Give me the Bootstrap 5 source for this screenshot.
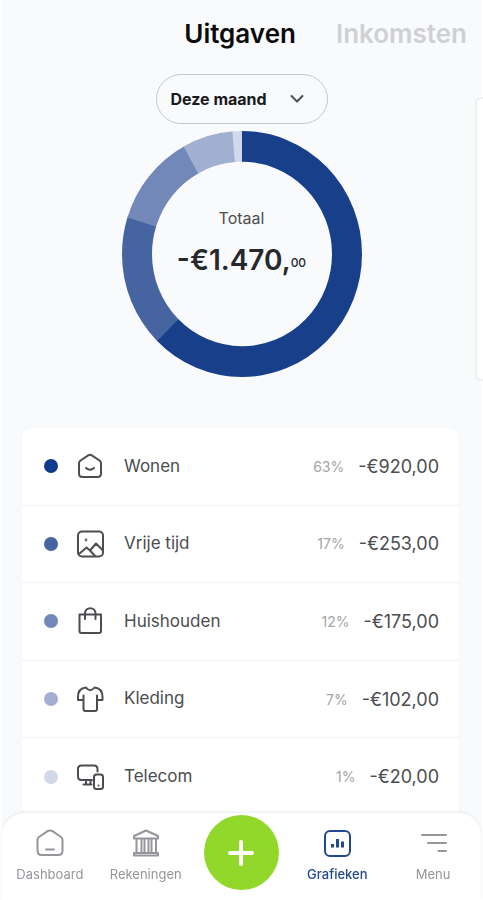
<!DOCTYPE html>
<html lang="nl">
<head>
<meta charset="utf-8">
<meta name="viewport" content="width=device-width, initial-scale=1">
<title>Uitgaven</title>
<link href="https://cdn.jsdelivr.net/npm/bootstrap@5.3.0/dist/css/bootstrap.min.css" rel="stylesheet">
<style>
  body {
    font-family: Inter, "Liberation Sans", sans-serif;
    color: #4c4d50;
    min-height: 100vh;
    background: linear-gradient(90deg, #fff 2px, #f9fafc 2px calc(100% - 2px), #fff calc(100% - 2px));
  }
  .tabs-top { gap: 40px; padding: 15px 16px 0 0; }
  .tabs-top a { font-size: 26px; line-height: 38px; font-weight: 600; color: #cfd0d2; text-decoration: none; }
  .tabs-top a.active { color: #0b0b0c; }

  .overview { display: grid; grid-template-columns: 1fr auto 1fr; padding-top: 21px; }
  .overview-main { grid-column: 2; }
  .next-panel { align-self: end; justify-self: end; width: 8px; height: 284px; background: #fff; border: 2px solid #eef0f1; border-right: 0; border-radius: 6px 0 0 6px; margin-bottom: -4px; }

  .period { width: 172px; height: 50px; border: 1px solid #c6c7c9; border-radius: 25px; padding: 0 14px; font-size: 16px; font-weight: 700; color: #18191b; background-color: transparent;
    background-image: none; }
  .period-box { display: grid; margin-bottom: 7px; }
  .period-box > * { grid-area: 1 / 1; }
  .period-box svg { justify-self: end; align-self: center; margin-right: 24px; pointer-events: none; }

  .donut { display: grid; place-items: center; }
  .donut > * { grid-area: 1 / 1; }
  .donut circle { fill: none; stroke-width: 30; }
  .total { text-align: center; padding-bottom: 16px; }
  .total-label { font-size: 16px; line-height: 24px; margin-bottom: 6px; }
  .total-sum { font-size: 28px; line-height: 48px; font-weight: 600; color: #26282c; }
  .total-sum small { font-size: 12px; font-weight: 500; vertical-align: 3px; }

  .costs { margin: 51px 24px 0 22px; min-height: 388px; border-radius: 10px; background: #fff; box-shadow: 0 0 4px #f3f5f8; }
  .cost { flex: 1 1 0; border-bottom: 1px solid #f2f2f4; padding: 0 20px 0 22px; font-size: 17px; }
  .dot { width: 14px; height: 14px; border-radius: 50%; margin-right: 16px; }
  .cost svg { width: 32px; height: 32px; margin-right: 18px; }
  .line-icon { fill: none; stroke: currentColor; stroke-width: 2; stroke-linejoin: round; stroke-linecap: round; }
  .share { font-size: 14px; color: #a3a4a6; margin-right: 14px; }
  .sum { font-size: 18px; }

  .bottom-bar { margin: 0 2px; height: 87px; background: #fff; border-radius: 22px 22px 0 0; box-shadow: 0 -1px 3px #e6e9ef; padding: 2px 0 0; display: grid; grid-template-columns: repeat(5, 1fr); }
  .bottom-bar a { color: #94969a; font-size: 13px; line-height: 20px; text-decoration: none; padding-top: 12px; }
  .bottom-bar a.active { color: #24488d; font-weight: 500; }
  .bottom-bar svg.line-icon { width: 32px; height: 32px; margin-bottom: 5px; }
  .add { width: 75px; height: 75px; border: 0; border-radius: 50%; background: #92d82b; justify-self: center; padding: 0; }
</style>
</head>
<body>
<header>
  <nav class="tabs-top d-flex justify-content-end" aria-label="Overzicht">
    <a href="#" class="active" aria-current="page">Uitgaven</a>
    <a href="#">Inkomsten</a>
  </nav>
</header>

<main>
  <section class="overview">
    <div class="overview-main d-flex flex-column align-items-center">
      <div class="period-box">
        <select class="form-select period" aria-label="Periode">
          <option>Deze maand</option>
          <option>Vorige maand</option>
        </select>
        <svg width="14" height="10" viewBox="0 0 14 10" class="line-icon" aria-hidden="true"><path d="M1.500 2 7 7.500 12.500 2"/></svg>
      </div>
      <div class="donut">
        <svg width="240" height="246" viewBox="0 0 240 240" preserveAspectRatio="none" role="img" aria-label="Verdeling van uitgaven">
          <g transform="rotate(-90 120 120)">
            <circle cx="120" cy="120" r="105" pathLength="1000" stroke="#183f8a" stroke-dasharray="626 1000"/>
            <circle cx="120" cy="120" r="105" pathLength="1000" stroke="#4664a0" stroke-dasharray="174 1000" stroke-dashoffset="-625"/>
            <circle cx="120" cy="120" r="105" pathLength="1000" stroke="#7288b9" stroke-dasharray="122 1000" stroke-dashoffset="-798"/>
            <circle cx="120" cy="120" r="105" pathLength="1000" stroke="#a1b0d1" stroke-dasharray="69 1000" stroke-dashoffset="-919"/>
            <circle cx="120" cy="120" r="105" pathLength="1000" stroke="#d0d8e9" stroke-dasharray="13 1000" stroke-dashoffset="-987"/>
          </g>
        </svg>
        <div class="total">
          <div class="total-label">Totaal</div>
          <div class="total-sum">-€1.470,<small>00</small></div>
        </div>
      </div>
    </div>
    <div class="next-panel"></div>
  </section>

  <ul class="costs list-unstyled d-flex flex-column mb-0">
    <li class="cost d-flex align-items-center">
      <span class="dot" style="background:#123a8c"></span>
      <svg class="line-icon" viewBox="0 0 32 32" aria-hidden="true"><path d="M5 13.500Q5 11.500 6.500 10.500L14.200 5.300Q16 4.200 17.800 5.300L25.500 10.500Q27 11.500 27 13.500V23.500Q27 27 23.500 27H8.500Q5 27 5 23.500ZM12 18Q16 21.500 20 18"/></svg>
      <span>Wonen</span>
      <span class="share ms-auto">63%</span><span class="sum">-€920,00</span>
    </li>
    <li class="cost d-flex align-items-center">
      <span class="dot" style="background:#4664a0"></span>
      <svg class="line-icon" viewBox="0 0 32 32" aria-hidden="true"><rect x="4" y="3.500" width="25" height="25" rx="4"/><path d="M5 26 12.500 19.500 16 22.500 22 15.500 28.500 22M16 22.500 21 28"/><circle cx="12" cy="12" r=".4"/></svg>
      <span>Vrije tijd</span>
      <span class="share ms-auto">17%</span><span class="sum">-€253,00</span>
    </li>
    <li class="cost d-flex align-items-center">
      <span class="dot" style="background:#7288b9"></span>
      <svg class="line-icon" viewBox="0 0 32 32" aria-hidden="true"><path d="M5.500 9.500H27V26Q27 28 25 28H7.500Q5.500 28 5.500 26ZM11 14V8.500C11 1.500 21.500 1.500 21.500 8.500V14"/></svg>
      <span>Huishouden</span>
      <span class="share ms-auto">12%</span><span class="sum">-€175,00</span>
    </li>
    <li class="cost d-flex align-items-center">
      <span class="dot" style="background:#a3aed2"></span>
      <svg class="line-icon" viewBox="0 0 32 32" aria-hidden="true"><path d="M12 4.500Q16.200 10 20.500 4.500C26 5 28.500 8 28.500 14V17H23V26Q23 28 21 28H11.500Q9.500 28 9.500 26V17H4V14C4 8 6.500 5 12 4.500ZM9.500 17V12.500M23 17V12.500"/></svg>
      <span>Kleding</span>
      <span class="share ms-auto">7%</span><span class="sum">-€102,00</span>
    </li>
    <li class="cost d-flex align-items-center">
      <span class="dot" style="background:#d2d8e8"></span>
      <svg class="line-icon" viewBox="0 0 32 32" aria-hidden="true"><path d="M23.500 10.500V8Q23.500 4.500 20 4.500H7.500Q4 4.500 4 8V15.500Q4 19 7.500 19H18M12 19.500V23M16.500 19.500V23M9.500 23.500H17.500"/><rect x="20" y="13.500" width="9" height="14.500" rx="2.500"/><path d="M24.500 24.500V24.600"/></svg>
      <span>Telecom</span>
      <span class="share ms-auto">1%</span><span class="sum">-€20,00</span>
    </li>
  </ul>
</main>

<nav class="bottom-bar fixed-bottom" aria-label="Hoofdmenu">
  <a href="#" class="d-flex flex-column align-items-center">
    <svg class="line-icon" viewBox="0 0 32 32" aria-hidden="true"><path d="M3.500 13Q3.500 11 5 10L13.500 4.200Q16 2.600 18.500 4.200L27 10Q28.500 11 28.500 13V23.500Q28.500 28 24 28H8Q3.500 28 3.500 23.500ZM12 22.500H20"/></svg>
    Dashboard</a>
  <a href="#" class="d-flex flex-column align-items-center">
    <svg class="line-icon" viewBox="0 0 32 32" aria-hidden="true"><path d="M4 11.500V9L16 3.500 28 9V11.500ZM4 28.500V26H28V28.500ZM6.500 12V25.500M11.500 12V25.500M14.500 12V25.500M18.500 12V25.500M21.500 12V25.500M26 12V25.500"/></svg>
    Rekeningen</a>
  <button type="button" class="add" aria-label="Toevoegen">
    <svg width="28" height="28" viewBox="0 0 28 28" fill="none" stroke="#fff" stroke-width="4" stroke-linecap="round" aria-hidden="true"><path d="M14 3V25M3 14H25"/></svg>
  </button>
  <a href="#" class="active d-flex flex-column align-items-center" aria-current="page">
    <svg class="line-icon" viewBox="0 0 32 32" aria-hidden="true"><rect x="4" y="4" width="25" height="25" rx="5"/><path stroke-width="3" stroke-linecap="butt" d="M11.500 20.500V17M16.500 20.500V12M21.500 20.500V14.500"/></svg>
    Grafieken</a>
  <a href="#" class="d-flex flex-column align-items-center">
    <svg class="line-icon" viewBox="0 0 32 32" aria-hidden="true"><path d="M5 8H29M11 16H29M21.500 24H29"/></svg>
    Menu</a>
</nav>
<script src="https://cdn.jsdelivr.net/npm/bootstrap@5.3.0/dist/js/bootstrap.bundle.min.js"></script>
</body>
</html>
